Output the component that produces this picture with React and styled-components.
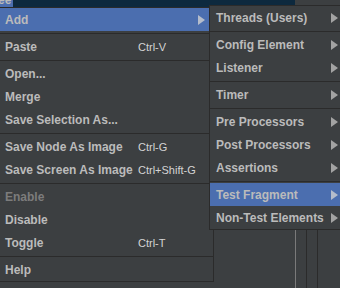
import React from "react";
import styled, { createGlobalStyle } from "styled-components";

const GlobalStyle = createGlobalStyle`
  html, body {
    margin: 0;
    padding: 0;
    background: #3c3f41;
  }
  body {
    font-family: "Liberation Sans", Arial, sans-serif;
    overflow: hidden;
  }
`;

const mainItems = [
  { label: "Add", arrow: true, active: true },
  { sep: true },
  { label: "Paste", key: "Ctrl-V" },
  { sep: true },
  { label: "Open..." },
  { label: "Merge" },
  { label: "Save Selection As..." },
  { sep: true },
  { label: "Save Node As Image", key: "Ctrl-G" },
  { label: "Save Screen As Image", key: "Ctrl+Shift-G" },
  { sep: true },
  { label: "Enable", disabled: true },
  { label: "Disable" },
  { label: "Toggle", key: "Ctrl-T" },
  { sep: true },
  { label: "Help" },
];

const subItems = [
  { label: "Threads (Users)", arrow: true },
  { sep: true },
  { label: "Config Element", arrow: true },
  { label: "Listener", arrow: true },
  { sep: true },
  { label: "Timer", arrow: true },
  { sep: true },
  { label: "Pre Processors", arrow: true },
  { label: "Post Processors", arrow: true },
  { label: "Assertions", arrow: true },
  { sep: true },
  { label: "Test Fragment", arrow: true, active: true },
  { label: "Non-Test Elements", arrow: true },
];

const Arrow = ({ active }) => (
  <svg width="7" height="10" viewBox="0 0 7 10">
    <polygon points="0,0 7,5 0,10" fill={active ? "#b4bccb" : "#a3a3a3"} />
  </svg>
);

const Menu = ({ items, variant }) => (
  <MenuBox variant={variant}>
    {items.map((it, i) =>
      it.sep ? (
        <Separator key={i} />
      ) : (
        <Row key={i} variant={variant} active={it.active} disabled={it.disabled}>
          <Label>{it.label}</Label>
          {it.key && <Shortcut>{it.key}</Shortcut>}
          {it.arrow && <Arrow active={it.active} />}
        </Row>
      )
    )}
  </MenuBox>
);

const App = () => {
  return (
    <>
      <GlobalStyle />
      <Screen>
        <TopBand>
          <Tab>
            <TabText>ee</TabText>
          </Tab>
          <Navy />
          <Gutter />
        </TopBand>
        <Lines>
          <Spacer />
          <LightLine />
          <Column />
          <DarkLine />
          <Column />
          <DarkLine />
          <Column />
        </Lines>
        <Menu items={mainItems} variant="main" />
        <Menu items={subItems} variant="sub" />
      </Screen>
    </>
  );
};
export default App;

const Screen = styled.div`
  position: relative;
  width: 340px;
  height: 288px;
  background: #3c3f41;
  overflow: hidden;
  display: flex;
  flex-direction: column;
`;

const TopBand = styled.div`
  display: flex;
  height: 7px;
`;

const Tab = styled.div`
  width: 13px;
  background: #4b6eaf;
  overflow: hidden;
`;

const TabText = styled.div`
  font-size: 12px;
  font-weight: bold;
  color: #bbbbbb;
  line-height: 12px;
  margin-top: -6px;
  margin-left: -2px;
`;

const Navy = styled.div`
  width: 282px;
  background: #0d293e;
`;

const Gutter = styled.div`
  flex: 1;
  background: #3c3f41;
`;

const Lines = styled.div`
  flex: 1;
  display: flex;
`;

const Spacer = styled.div`
  width: 295px;
`;

const LightLine = styled.div`
  width: 1px;
  background: #7a7a7a;
`;

const DarkLine = styled.div`
  width: 1px;
  background: #2b2b2b;
`;

const Column = styled.div`
  width: 10px;
`;

const MenuBox = styled.div`
  position: absolute;
  left: ${(p) => (p.variant === "sub" ? "209px" : "-1px")};
  top: ${(p) => (p.variant === "sub" ? "5px" : "7px")};
  width: ${(p) => (p.variant === "sub" ? "136px" : "213px")};
  background: #3c3f41;
  border: 1px solid #2b2b2b;
  display: flex;
  flex-direction: column;
`;

const Row = styled.div`
  height: 23px;
  display: flex;
  align-items: center;
  padding: 0 8px 0 ${(p) => (p.variant === "sub" ? "6px" : "5px")};
  background: ${(p) => (p.active ? "#4b6eaf" : "transparent")};
  color: ${(p) => (p.disabled ? "#7c7c7c" : "#bbbbbb")};
`;

const Label = styled.span`
  flex: 1;
  font-size: 12px;
  font-weight: bold;
  white-space: nowrap;
`;

const Shortcut = styled.span`
  width: 67px;
  font-size: 11px;
  color: #d4d4d4;
  white-space: nowrap;
`;

const Separator = styled.div`
  height: 4px;
  display: flex;
  align-items: center;

  &::before {
    content: "";
    flex: 1;
    height: 1px;
    background: #2b2b2b;
  }
`;
